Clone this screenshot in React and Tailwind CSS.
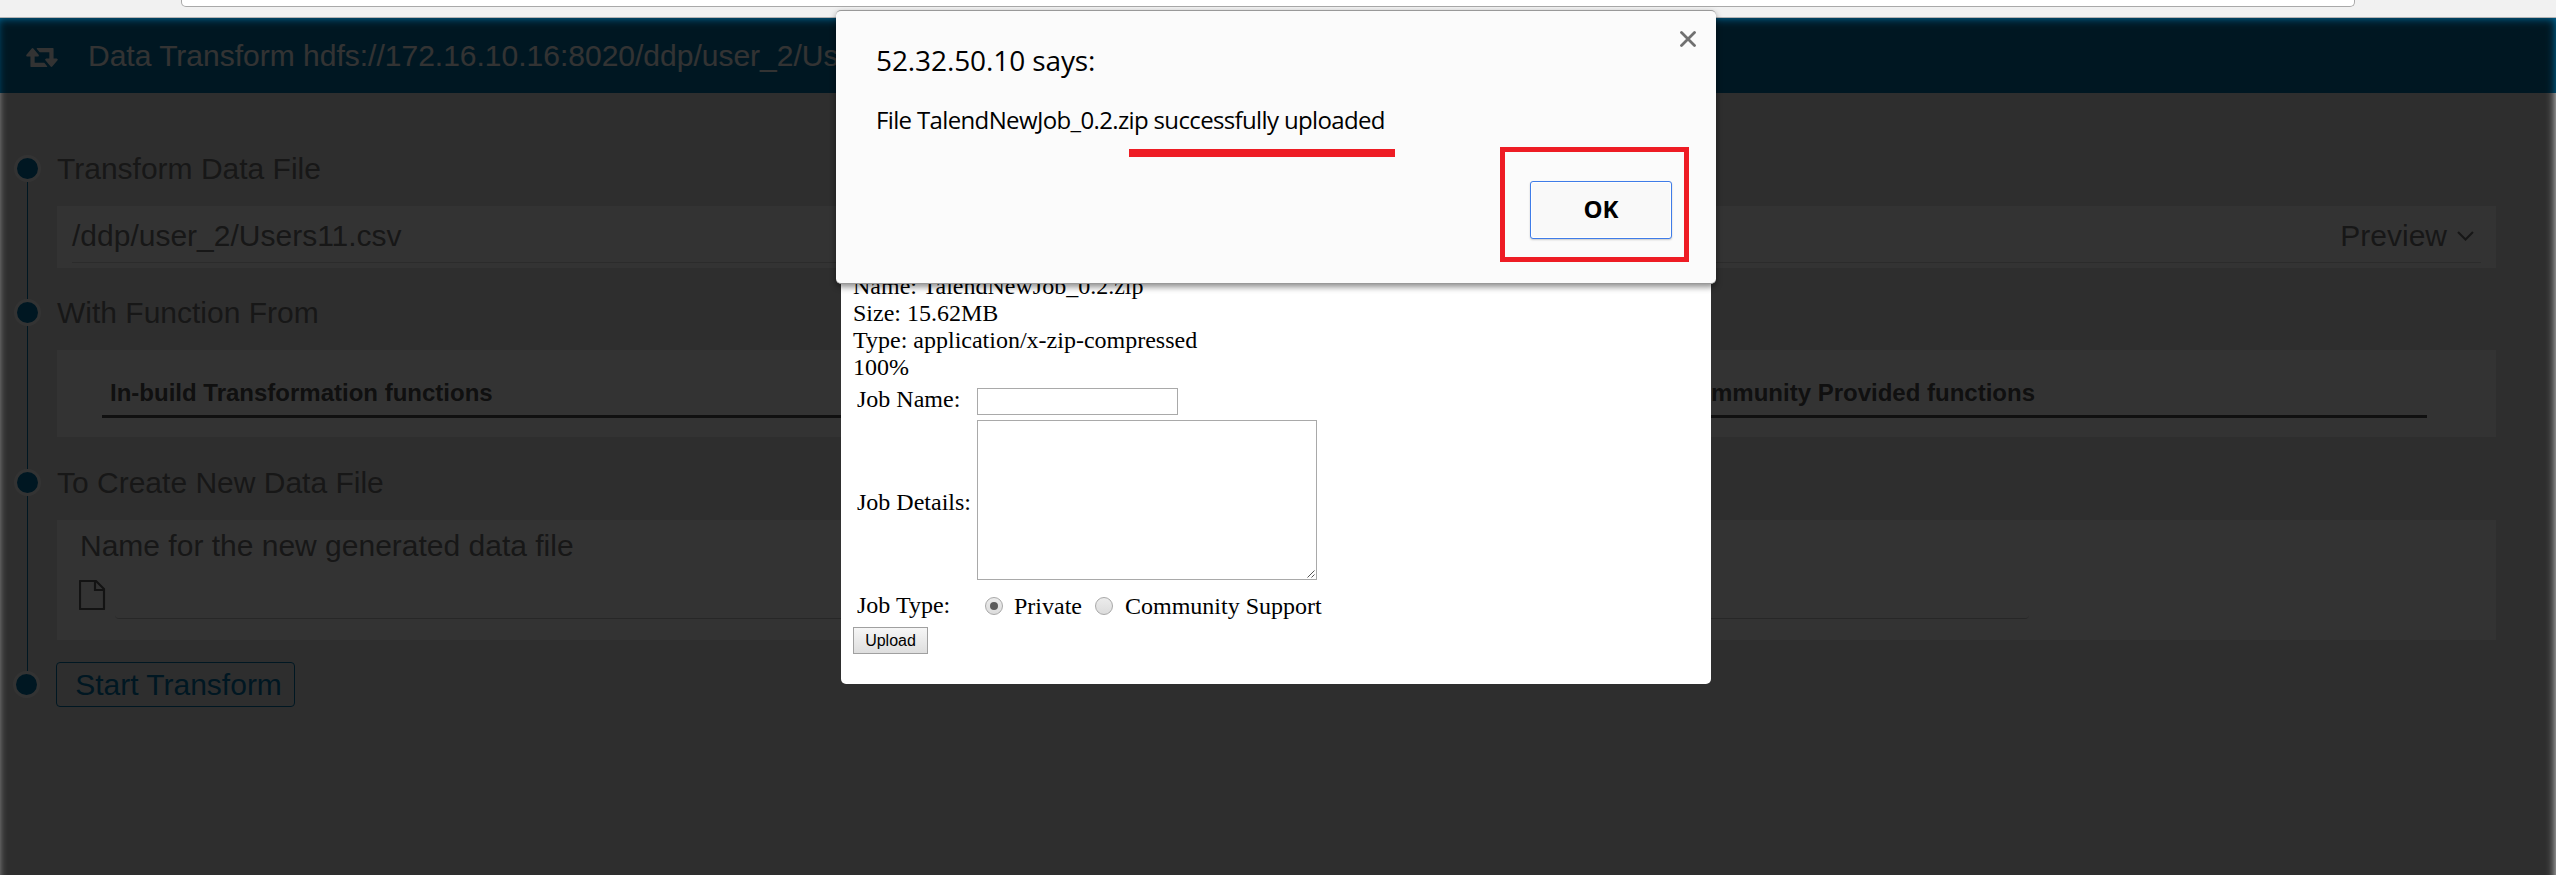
import React from "react";

const SANS = "font-['Liberation_Sans',Arial,sans-serif]";
const SERIF = "font-['Liberation_Serif','Times_New_Roman',serif]";

function RetweetIcon() {
  return (
    <svg viewBox="0 384 1920 1280" className="h-[21px] w-8" fill="currentColor">
      <path d="M1280 1632q0 13-9.5 22.5t-22.5 9.5h-960q-8 0-13.5-2t-9-7-5.5-8-3-11.500-1-11.500v-600h-192q-26 0-45-19t-19-45q0-24 15-41l320-384q19-22 49-22t49 22l320 384q15 17 15 41 0 26-19 45t-45 19h-192v384h576q16 0 25 11l160 192q7 10 7 21zm640-416q0 24-15 41l-320 384q-20 23-49 23t-49-23l-320-384q-15-17-15-41 0-26 19-45t45-19h192v-384h-576q-16 0-25-12l-160-192q-7-9-7-20 0-13 9.500-22.500t22.500-9.500h960q8 0 13.500 2t9 7 5.500 8 3 11.500 1 11.500v600h192q26 0 45 19t19 45z" />
    </svg>
  );
}

function FileIcon() {
  return (
    <svg viewBox="0 0 27 30" className="h-[30px] w-[27px]" fill="none" stroke="currentColor" strokeWidth="2.2">
      <path d="M1 1H17L25 9V29H1Z" strokeLinejoin="round" />
      <path d="M16 1V10H25" />
    </svg>
  );
}

function Chevron() {
  return (
    <svg viewBox="0 0 17 10" className="h-2.5 w-[17px]" fill="none" stroke="currentColor" strokeWidth="2.2">
      <path d="M1 1L8.500 8.500L16 1" />
    </svg>
  );
}

function Step({ title, height, children }) {
  return (
    <section className={`flex ${height}`}>
      <div className="flex w-[57px] shrink-0 flex-col items-center pr-0.5">
        <span className="size-[27px] shrink-0 rounded-full border-3 border-white bg-[#0074aa]" />
        <span className="w-px flex-1 bg-[#0074aa]" />
      </div>
      <div className="mr-[60px] flex-1">
        <h2 className="mb-6 text-[30px] leading-[27px] text-[#757575]">{title}</h2>
        {children}
      </div>
    </section>
  );
}

function TransformPage() {
  return (
    <div className={`h-full bg-[#e6e6e6] ${SANS}`}>
      <header className="flex h-[75px] items-center bg-[#0074aa] pl-[26px] text-white">
        <div className="mt-px">
          <RetweetIcon />
        </div>
        <h1 className="ml-[30px] text-[30px] leading-[34px] whitespace-nowrap">
          Data Transform hdfs://172.16.10.16:8020/ddp/user_2/Us
        </h1>
      </header>
      <main className="pt-[62px]">
        <Step title="Transform Data File" height="h-36">
          <div className="h-[62px] bg-white px-[15px]">
            <div className="flex h-[57px] items-center justify-between border-b border-[#d4d4d4] pt-[3px] pr-[7px] text-[30px] leading-none text-[#757575]">
              <span>/ddp/user_2/Users11.csv</span>
              <span className="flex items-center gap-2.5">
                Preview <Chevron />
              </span>
            </div>
          </div>
        </Step>
        <Step title="With Function From" height="h-[170px]">
          <div className="h-[87px] bg-white pt-7 pr-[69px] pl-[45px]">
            <div className="flex h-10 justify-between border-b-3 border-[#505050] pt-[3px] pr-[392px] pl-2 text-2xl leading-6 font-bold text-[#505050]">
              <span>In-build Transformation functions</span>
              <span>Community Provided functions</span>
            </div>
          </div>
        </Step>
        <Step title="To Create New Data File" height="h-[202px]">
          <div className="h-[120px] bg-white pt-[11px] pl-[22px] text-[#757575]">
            <div className="pl-px text-[30px] leading-[30px]">Name for the new generated data file</div>
            <div className="flex">
              <div className="mt-[19px] text-[#606060]">
                <FileIcon />
              </div>
              <div className="ml-[9px] h-[58px] w-[1914px] rounded border-b border-[#c4c4c4]" />
            </div>
          </div>
        </Step>
        <section className="flex">
          <div className="flex w-14 shrink-0 justify-center pr-[3px]">
            <span className="size-[27px] rounded-full border-3 border-white bg-[#0074aa]" />
          </div>
          <button className="-mt-[9px] h-[45px] w-[239px] rounded border border-[#0074aa] pl-1.5 text-[30px] leading-none text-[#0074aa]">
            Start Transform
          </button>
        </section>
      </main>
    </div>
  );
}

function Radio({ checked }) {
  return (
    <span className="-mt-px flex size-[18px] items-center justify-center rounded-full border border-[#a8a8a8] bg-linear-to-b from-[#ececec] to-[#dcdcdc]">
      {checked && <span className="size-2 rounded-full bg-[#5c5c5c]" />}
    </span>
  );
}

function UploadDialog() {
  return (
    <div className={`absolute top-[200px] left-[841px] h-[484px] w-[870px] rounded-[5px] bg-white pt-[73px] pl-3 text-2xl leading-[27px] text-black ${SERIF}`}>
      <div>Name: TalendNewJob_0.2.zip</div>
      <div>Size: 15.62MB</div>
      <div>Type: application/x-zip-compressed</div>
      <div>100%</div>
      <div className="mt-[5px] flex pl-1">
        <label className="w-[120px]">Job Name:</label>
        <input className="mt-0.5 h-[27px] w-[201px] border border-[#a9a9a9] bg-white" />
      </div>
      <div className="mt-[5px] flex items-center pl-1">
        <label className="w-[120px] pt-1">Job Details:</label>
        <div className="flex h-40 w-[340px] items-end justify-end border border-[#a9a9a9] p-px">
          <svg viewBox="0 0 8 8" className="size-2" stroke="#555" strokeWidth="1">
            <path d="M0.500 7.500L7.500 0.500M4.500 7.500L7.500 4.500" />
          </svg>
        </div>
      </div>
      <div className="mt-3 flex pl-1">
        <span className="w-32">Job Type:</span>
        <span className="flex items-center whitespace-nowrap">
          <Radio checked />
          <span className="mr-[13px] ml-[11px] pt-px">Private</span>
          <Radio />
          <span className="ml-3 pt-px">Community Support</span>
        </span>
      </div>
      <button className={`mt-[7px] block h-[27px] w-[75px] border border-[#a0a0a0] bg-linear-to-b from-[#f6f6f6] to-[#dedede] text-[16px] leading-none ${SANS}`}>
        Upload
      </button>
    </div>
  );
}

function AlertDialog() {
  return (
    <div className="absolute top-2.5 left-[836px] h-[274px] w-[880px] rounded-[5px] border-y border-[#999] bg-[#fbfbfb] font-['Open_Sans','Noto_Sans',sans-serif] text-black shadow-[0_3px_6px_rgba(0,0,0,0.45)]">
      <div className="flex justify-between pt-5 pr-5 pl-10">
        <div className="pt-[13px] text-[28px] leading-8 tracking-[-0.1px] whitespace-nowrap">52.32.50.10 says:</div>
        <svg viewBox="0 0 16 16" className="size-4" stroke="#707070" strokeWidth="2.800" strokeLinecap="round">
          <path d="M1.500 1.500L14.500 14.500M14.500 1.500L1.500 14.500" />
        </svg>
      </div>
      <div className="mt-[30px] pl-10 text-2xl leading-7 tracking-[-0.64px] whitespace-nowrap">
        File TalendNewJob_0.2.zip successfully uploaded
      </div>
      <div className="absolute top-[138px] left-[293px] h-2 w-[266px] bg-[#ee1c24]" />
      <div className="absolute top-[136px] left-[664px] flex h-[115px] w-[189px] border-5 border-[#ee1c24] pt-[29px] pl-[25px]">
        <button className="h-[58px] w-[142px] rounded-[3px] border border-[#3f7ce8] bg-[#f9f9f9] pb-0.5 text-2xl leading-none font-bold shadow-[0_1px_2px_rgba(0,0,0,0.2),inset_0_0_0_1px_#fff]">
          OK
        </button>
      </div>
    </div>
  );
}

export default function App() {
  return (
    <div className="relative flex h-[875px] w-[2556px] flex-col overflow-hidden">
      <div className="flex h-[18px] shrink-0 justify-center border-b border-[#b5b3b3] bg-[#f1f1f1] pr-5">
        <div className="h-[7px] w-[2174px] rounded-b-[5px] border border-t-0 border-[#a9a9a9] bg-white" />
      </div>
      <div className="relative flex-1 overflow-hidden">
        <TransformPage />
        <div className="absolute top-0 right-0 -bottom-6 -left-[3px] bg-black/80 blur-[5px]" />
      </div>
      <UploadDialog />
      <AlertDialog />
    </div>
  );
}
